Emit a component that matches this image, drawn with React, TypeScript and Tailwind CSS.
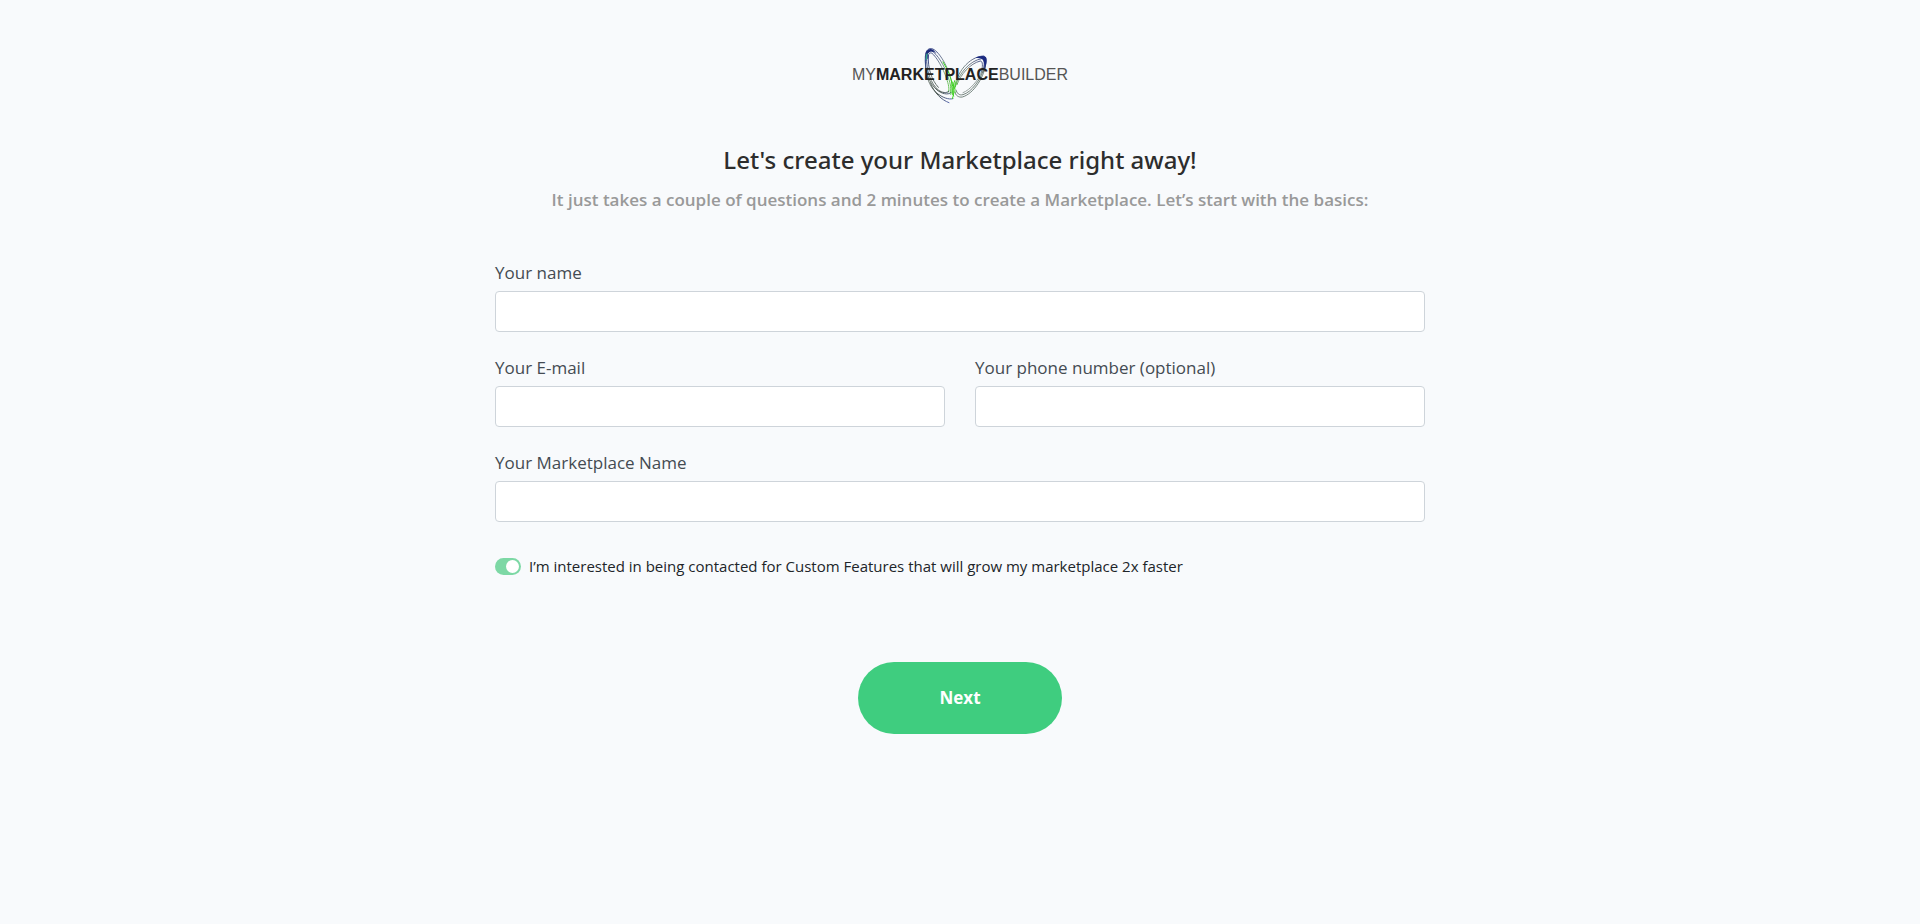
import { useId, useState } from "react";

function Butterfly() {
  return (
    <svg
      viewBox="0 0 240 210"
      width="80"
      height="70"
      fill="none"
      strokeLinecap="round"
      aria-hidden="true"
      className="absolute left-[63px] top-0"
    >
      <defs>
        <linearGradient id="leftWing" gradientUnits="userSpaceOnUse" x1="40" y1="30" x2="120" y2="150">
          <stop offset="0" stopColor="#1f2f78" />
          <stop offset="0.3" stopColor="#5d6b86" />
          <stop offset="0.65" stopColor="#6fae6c" />
          <stop offset="1" stopColor="#3fc01f" />
        </linearGradient>
        <linearGradient id="rightWing" gradientUnits="userSpaceOnUse" x1="212" y1="50" x2="112" y2="140">
          <stop offset="0" stopColor="#1b2a80" />
          <stop offset="0.3" stopColor="#5a6478" />
          <stop offset="0.75" stopColor="#6f8a74" />
          <stop offset="1" stopColor="#3fc01f" />
        </linearGradient>
        <linearGradient id="lowerWing" gradientUnits="userSpaceOnUse" x1="30" y1="60" x2="108" y2="180">
          <stop offset="0" stopColor="#2b3f86" />
          <stop offset="0.4" stopColor="#6e7a72" />
          <stop offset="0.75" stopColor="#3d4a45" />
          <stop offset="1" stopColor="#4a5aa0" />
        </linearGradient>
      </defs>
      <g stroke="url(#leftWing)" strokeWidth="2.6">
        <path d="M32 58C28 36 38 24 50 26C70 30 96 76 106 110C112 132 113 148 112 164" />
        <path d="M36 56C34 38 42 30 50 33C66 40 90 80 100 112C107 134 109 148 106 158" />
        <path d="M39 52C39 42 45 36 51 40C64 50 84 84 94 114C101 134 104 148 100 156" />
      </g>
      <g stroke="url(#lowerWing)" strokeWidth="2.8">
        <path d="M31 50C28 90 42 130 66 150C80 161 98 166 108 158" />
        <path d="M35 50C33 92 48 132 70 150C82 159 94 160 102 154" />
        <path d="M32 60C28 100 42 140 66 160C82 172 100 180 114 176" />
        <path d="M40 46C38 86 50 120 70 142" />
        <path d="M46 128C58 160 80 180 102 188" />
      </g>
      <path d="M32 52C30 34 38 26 48 27C54 28 60 34 64 41C56 34 46 32 40 40C37 45 37 52 37 58Z" fill="#1b2a78" />
      <path d="M34 58C33 50 34 46 36 42" stroke="#35a58c" strokeWidth="4" />
      <g stroke="url(#rightWing)" strokeWidth="2.6">
        <path d="M118 146C124 100 160 50 206 48C216 50 215 70 206 96" />
        <path d="M121 140C130 102 164 62 200 56C210 56 210 72 202 98" />
        <path d="M126 134C136 104 166 70 196 63C204 64 204 78 198 100" />
      </g>
      <g stroke="#5f7068" strokeWidth="2.6">
        <path d="M212 66C212 106 176 162 142 171C130 173 122 166 119 156" />
        <path d="M207 86C196 120 170 156 144 164C132 167 126 160 123 150" />
        <path d="M203 92C190 120 166 150 144 158" stroke="#8a9591" />
      </g>
      <path d="M182 54C192 47 206 46 213 52C217 60 214 76 208 90C208 74 208 64 202 58C196 54 190 54 182 54Z" fill="#1b2a80" />
      <g stroke="#3fd422" strokeWidth="3">
        <path d="M84 66C98 88 108 112 113 138" />
        <path d="M113 126C118 144 118 160 112 176" />
        <path d="M119 122C114 140 112 160 116 168" />
        <path d="M108 134C112 144 112 158 106 164" strokeWidth="2" />
        <path d="M124 126C120 140 118 150 121 158" strokeWidth="2" />
      </g>
    </svg>
  );
}

function Logo() {
  return (
    <a href="#" aria-label="MyMarketplaceBuilder" className="relative flex h-[70px] items-center font-['Liberation_Sans',sans-serif] text-base text-[#555]">
      <Butterfly />
      <span className="relative whitespace-nowrap">
        MY<b className="font-bold text-[#222]">MARKETPLACE</b>BUILDER
      </span>
    </a>
  );
}

function Field({ label, type = "text" }: { label: string; type?: string }) {
  const id = useId();
  return (
    <div className="flex flex-col gap-1.5">
      <label htmlFor={id} className="text-[17px] leading-6 text-[#444b52]">
        {label}
      </label>
      <input
        id={id}
        type={type}
        className="h-[41px] w-full rounded border border-[#ced4da] bg-white px-3 text-base text-[#495057] outline-none focus:border-[#3fcd7f]"
      />
    </div>
  );
}

export default function App() {
  const [contact, setContact] = useState(true);
  return (
    <main className="flex min-h-screen flex-col items-center bg-[#f8fafc] px-4 pt-10 pb-16 font-['Open_Sans',sans-serif] text-[#212529]">
      <Logo />
      <h1 className="mt-8 text-center font-['Noto_Sans','Open_Sans',sans-serif] text-2xl leading-9 font-medium text-[#2d2d2d]">
        Let's create your Marketplace right away!
      </h1>
      <p className="mt-2.5 text-center text-[17px] leading-6 font-semibold text-[#999]">
        It just takes a couple of questions and 2 minutes to create a Marketplace. Let’s start with the basics:
      </p>
      <form className="mt-[49px] flex w-full max-w-[930px] flex-col gap-6" onSubmit={(e) => e.preventDefault()}>
        <Field label="Your name" />
        <div className="grid grid-cols-1 gap-x-[30px] gap-y-6 md:grid-cols-2">
          <Field label="Your E-mail" type="email" />
          <Field label="Your phone number (optional)" type="tel" />
        </div>
        <Field label="Your Marketplace Name" />
        <label className="mt-2 flex items-center gap-2 self-start text-[15px] leading-6">
          <input
            type="checkbox"
            role="switch"
            checked={contact}
            onChange={(e) => setContact(e.target.checked)}
            className="flex h-[17px] w-[26px] shrink-0 appearance-none items-center rounded-full bg-[#adb5bd] p-0.5 before:size-[13px] before:rounded-full before:bg-white checked:justify-end checked:bg-[#7dd8a5]"
          />
          I’m interested in being contacted for Custom Features that will grow my marketplace 2x faster
        </label>
        <button
          type="submit"
          className="mt-[60px] h-[72px] w-[204px] self-center rounded-full bg-[#3fcd7f] text-[17px] font-bold text-white"
        >
          Next
        </button>
      </form>
    </main>
  );
}
